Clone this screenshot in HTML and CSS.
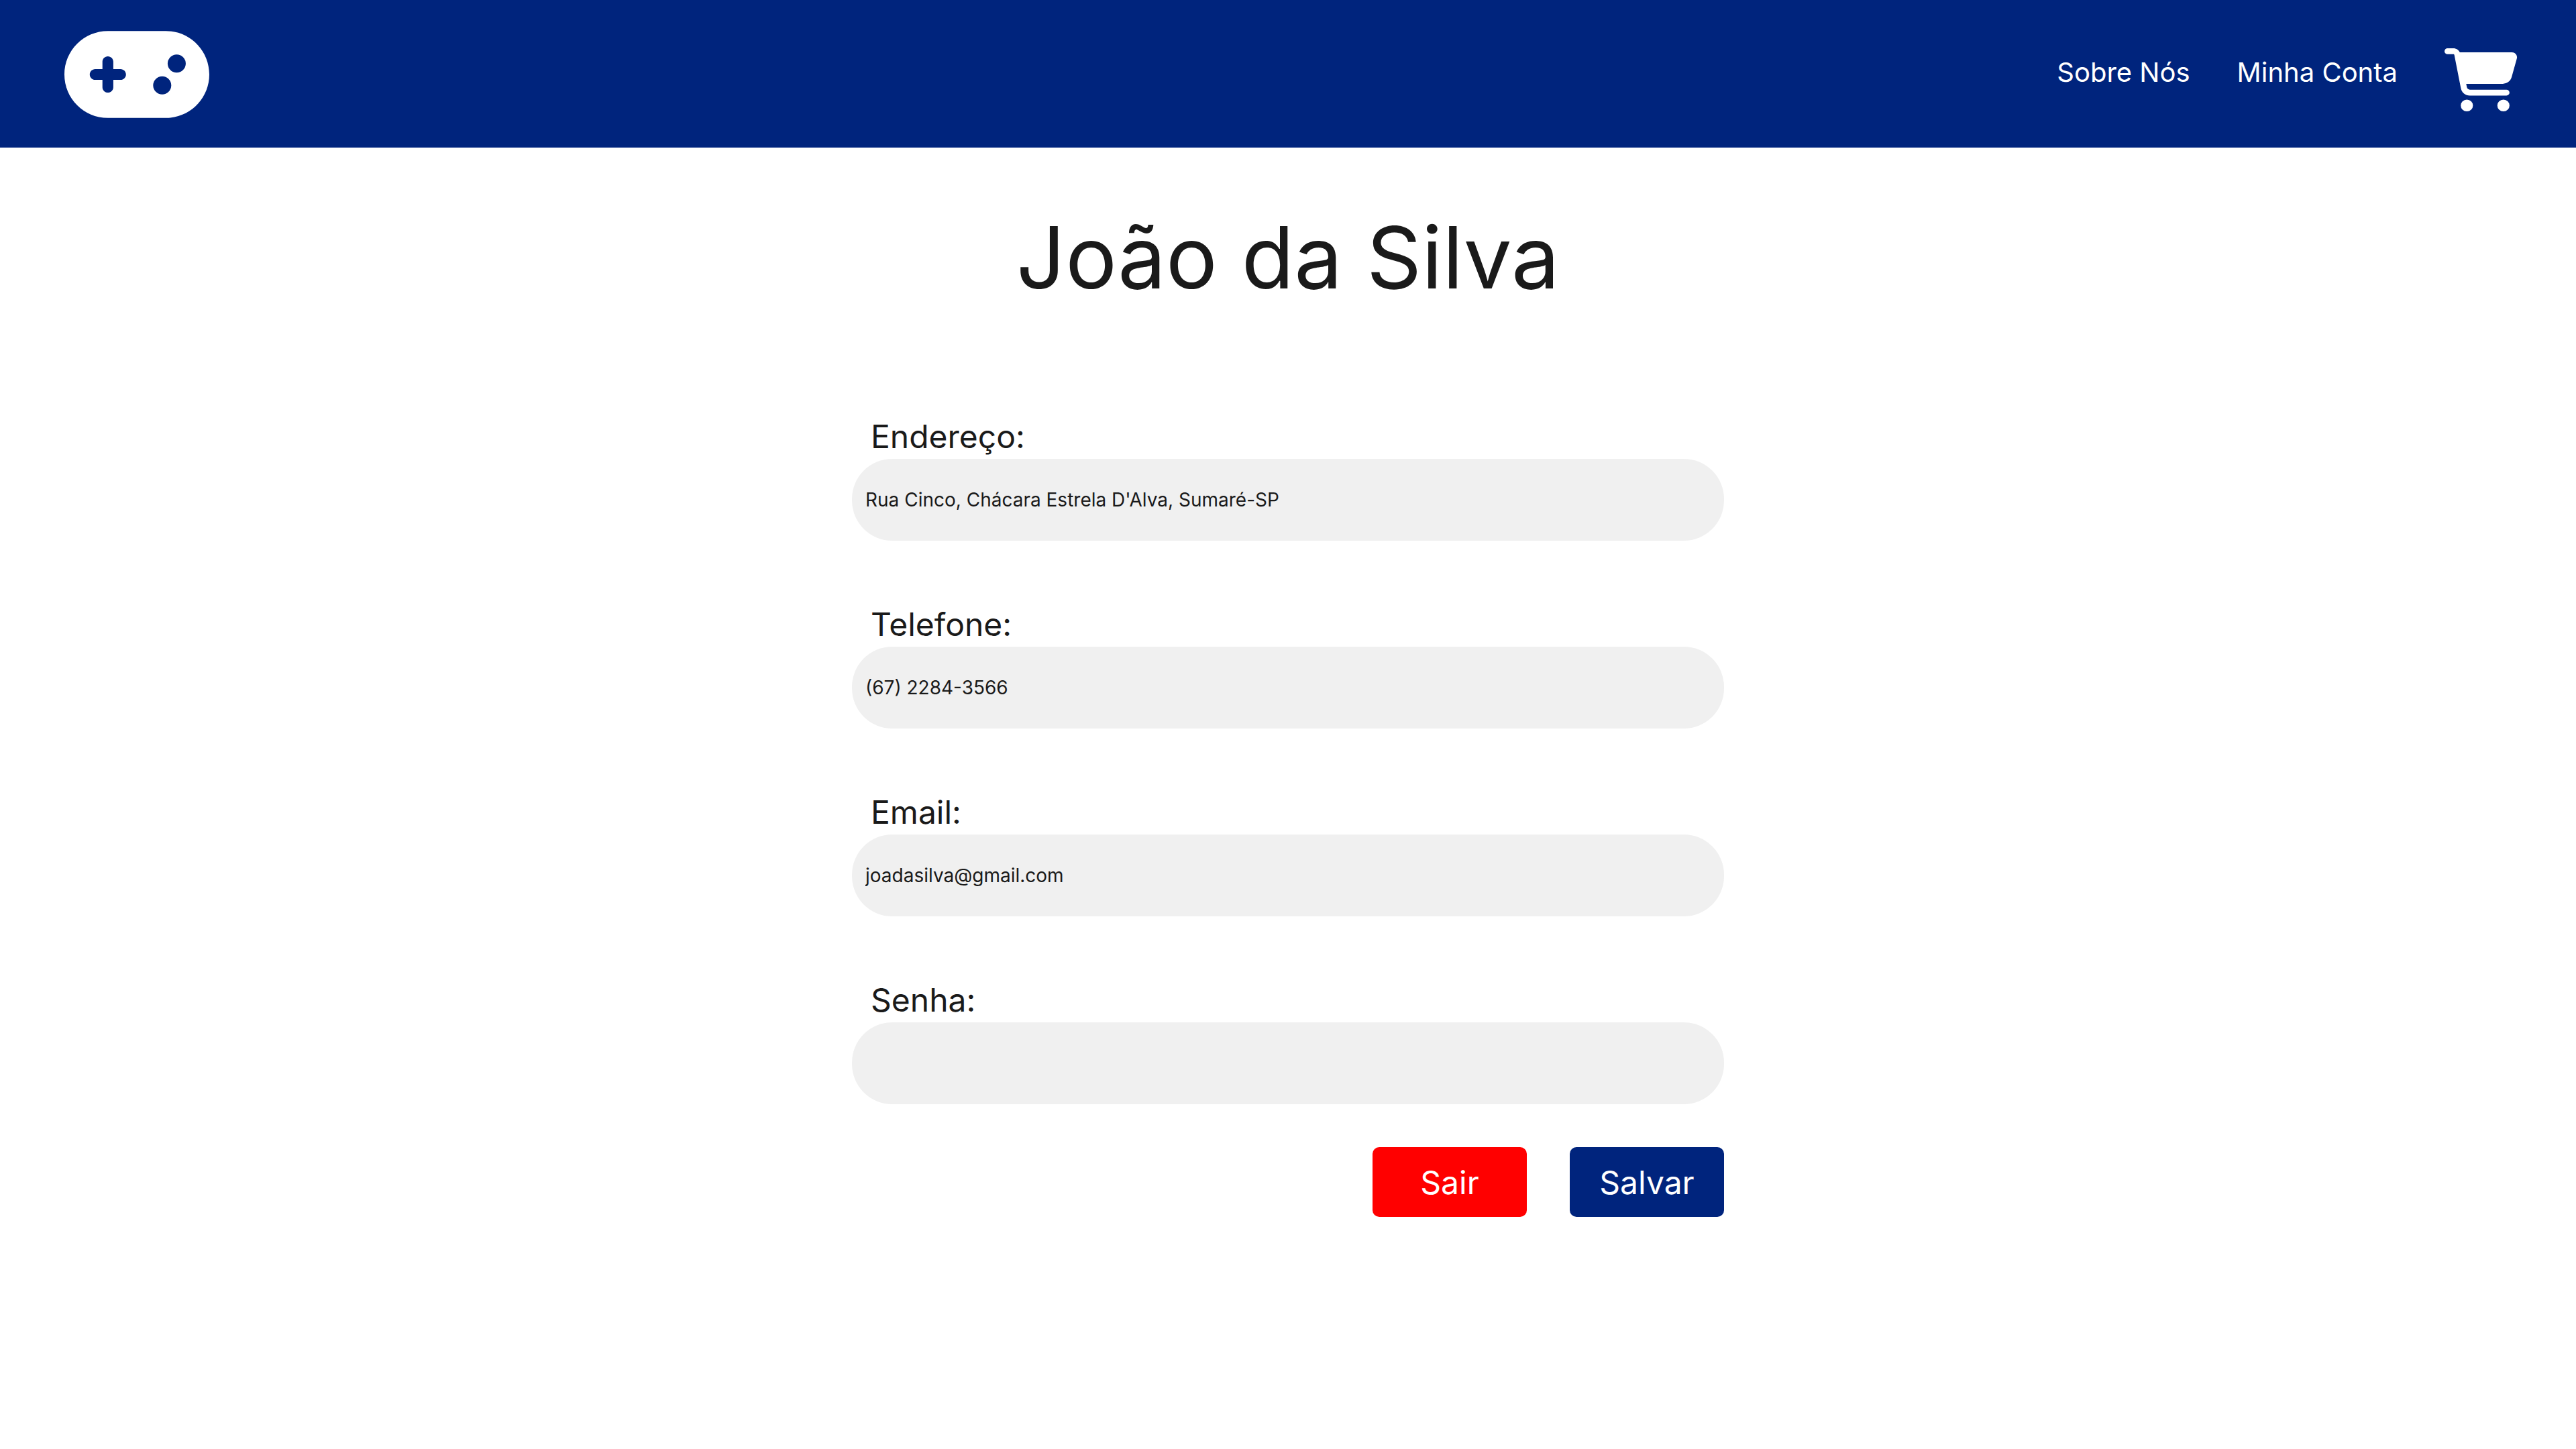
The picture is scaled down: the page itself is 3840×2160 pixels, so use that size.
FILE: index.html
```html
<!DOCTYPE html>
<html lang="pt-BR">
<head>
<meta charset="utf-8">
<meta name="viewport" content="width=device-width, initial-scale=1">
<title>Minha Conta</title>
<link rel="stylesheet" href="styles.css">
</head>
<body>
<header class="header">
  <a class="logo" href="#" aria-label="Início">
    <svg class="logo-icon" viewBox="0 64 640 384" aria-hidden="true"><path d="M192 64C86 64 0 150 0 256S86 448 192 448H448c106 0 192-86 192-192s-86-192-192-192H192zM496 168a40 40 0 1 1 0 80 40 40 0 1 1 0-80zM392 304a40 40 0 1 1 80 0 40 40 0 1 1 -80 0zM168 200c0-13.300 10.700-24 24-24s24 10.700 24 24v32h32c13.300 0 24 10.700 24 24s-10.700 24-24 24H216v32c0 13.300-10.700 24-24 24s-24-10.700-24-24V280H136c-13.300 0-24-10.700-24-24s10.700-24 24-24h32V200z"/></svg>
  </a>
  <nav class="nav">
    <a class="nav-link" href="#">Sobre Nós</a>
    <a class="nav-link" href="#">Minha Conta</a>
    <a class="cart" href="#" aria-label="Carrinho">
      <svg class="cart-icon" viewBox="0 0 576 512" preserveAspectRatio="none" aria-hidden="true"><path d="M0 24C0 10.700 10.700 0 24 0H69.500c22 0 41.500 12.800 50.600 32h411c26.300 0 45.500 25 38.600 50.400l-41 152.300c-8.500 31.400-37 53.300-69.500 53.300H170.700l5.400 28.500c2.200 11.300 12.100 19.500 23.600 19.500H488c13.300 0 24 10.700 24 24s-10.700 24-24 24H199.700c-34.600 0-64.300-24.600-70.700-58.500L77.400 54.500c-.7-3.800-4-6.500-7.900-6.500H24C10.700 48 0 37.300 0 24zM128 464a48 48 0 1 1 96 0 48 48 0 1 1 -96 0zm336-48a48 48 0 1 1 0 96 48 48 0 1 1 0-96z"/></svg>
    </a>
  </nav>
</header>
<main class="main">
  <h1 class="title">João da Silva</h1>
  <form class="form">
    <div class="fields">
      <div class="field">
        <label class="label" for="endereco">Endereço:</label>
        <input class="input" id="endereco" type="text" value="Rua Cinco, Chácara Estrela D'Alva, Sumaré-SP">
      </div>
      <div class="field">
        <label class="label" for="telefone">Telefone:</label>
        <input class="input" id="telefone" type="tel" value="(67) 2284-3566">
      </div>
      <div class="field">
        <label class="label" for="email">Email:</label>
        <input class="input" id="email" type="email" value="joadasilva@gmail.com">
      </div>
      <div class="field">
        <label class="label" for="senha">Senha:</label>
        <input class="input" id="senha" type="password">
      </div>
    </div>
    <div class="actions">
      <button class="button button-exit" type="button">Sair</button>
      <button class="button button-save" type="submit">Salvar</button>
    </div>
  </form>
</main>
</body>
</html>
```
FILE: styles.css
```css
* {
  box-sizing: border-box;
}

body {
  margin: 0;
  background: #ffffff;
  color: #1a1a1a;
  font-family: Inter, "Liberation Sans", sans-serif;
  font-weight: 400;
}

.header {
  display: flex;
  align-items: flex-start;
  justify-content: space-between;
  padding: 46px 87px 44px 96px;
  background: #00247d;
}

.logo-icon {
  display: block;
  width: 216px;
  height: 130px;
  fill: #ffffff;
}

.nav {
  display: flex;
  align-items: center;
  gap: 70px;
  padding-top: 26px;
}

.nav-link {
  padding-bottom: 22px;
  color: #ffffff;
  font-size: 40px;
  line-height: 48px;
  text-decoration: none;
}

.cart-icon {
  display: block;
  width: 109px;
  height: 94px;
  fill: #ffffff;
}

.main {
  display: flex;
  flex-direction: column;
  align-items: center;
  padding: 84px 32px 96px;
}

.title {
  margin: 0;
  font-size: 128px;
  font-weight: inherit;
  line-height: 160px;
}

.form {
  display: flex;
  flex-direction: column;
  gap: 64px;
  width: 100%;
  max-width: 1300px;
  margin-top: 158px;
}

.fields {
  display: flex;
  flex-direction: column;
  gap: 96px;
}

.field {
  display: flex;
  flex-direction: column;
  gap: 4px;
}

.label {
  padding-left: 28px;
  font-size: 48px;
  line-height: 58px;
}

.input {
  width: 100%;
  height: 122px;
  padding: 0 20px;
  border: 0;
  border-radius: 60px;
  background: #f0f0f0;
  color: inherit;
  font-family: inherit;
  font-size: 28px;
  font-weight: inherit;
}

.actions {
  display: flex;
  justify-content: flex-end;
  gap: 64px;
}

.button {
  width: 230px;
  height: 104px;
  padding: 0;
  border: 0;
  border-radius: 10px;
  color: #ffffff;
  font-family: inherit;
  font-size: 48px;
  font-weight: inherit;
}

.button-exit {
  background: #ff0000;
}

.button-save {
  background: #00247d;
}
```
